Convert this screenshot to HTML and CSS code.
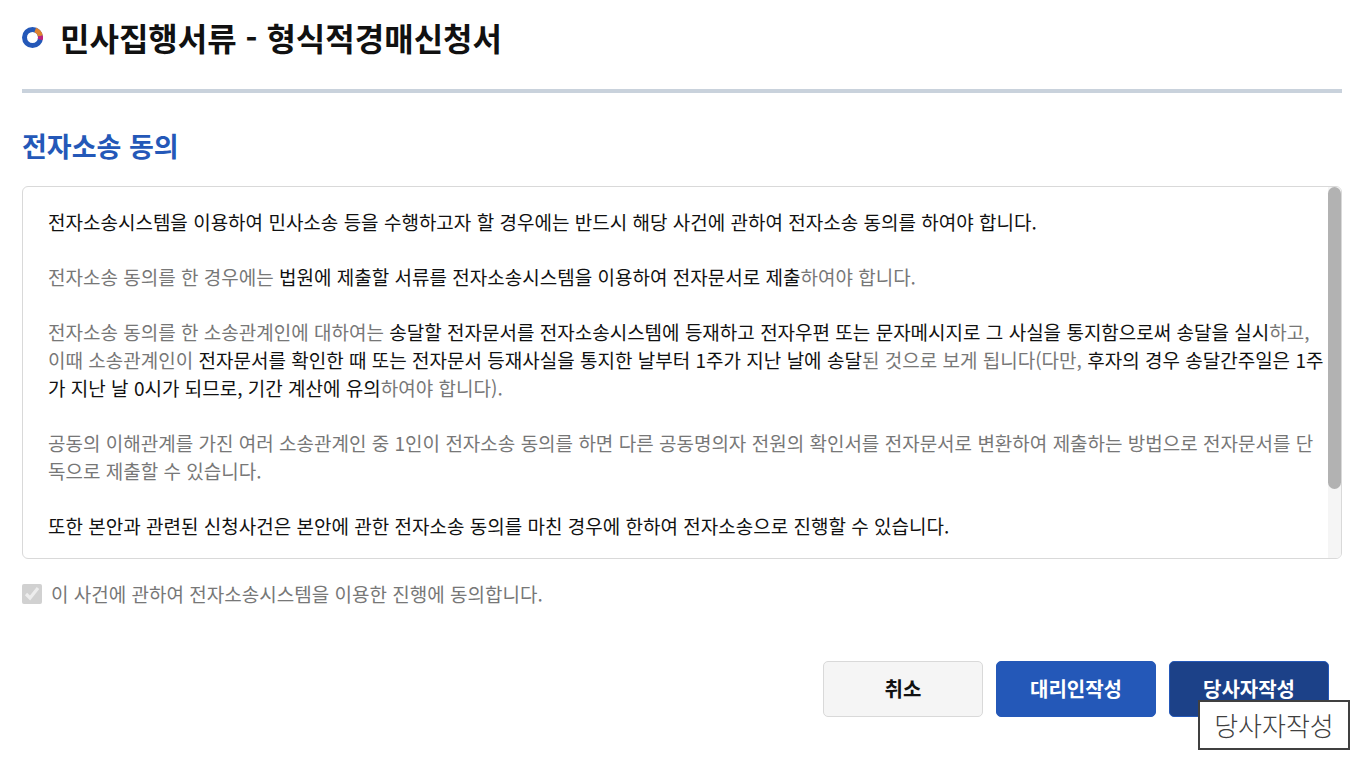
FILE: index.html
```html
<!DOCTYPE html>
<html lang="ko">
<head>
<meta charset="utf-8">
<title>민사집행서류 - 형식적경매신청서</title>
<link rel="stylesheet" href="styles.css">
</head>
<body>
<main class="page">
  <header class="page-header">
    <svg class="title-mark" viewBox="0 0 22 22" aria-hidden="true">
      <circle cx="10.5" cy="10.5" r="8" fill="none" stroke="#2458b8" stroke-width="5"/>
      <path d="M13.2 3A8 8 0 0 1 18.4 9" fill="none" stroke="#e0822f" stroke-width="5"/>
      <path d="M18.4 9A8 8 0 0 1 18.2 12.6" fill="none" stroke="#c0207c" stroke-width="5"/>
    </svg>
    <h1 class="page-title">민사집행서류 - 형식적경매신청서</h1>
  </header>
  <section class="consent">
    <h2 class="section-title">전자소송 동의</h2>
    <div class="terms">
      <div class="terms-body">
        <p><strong>전자소송시스템을 이용하여 민사소송 등을 수행하고자 할 경우에는 반드시 해당 사건에 관하여 전자소송 동의를 하여야 합니다.</strong></p>
        <p>전자소송 동의를 한 경우에는 <strong>법원에 제출할 서류를 전자소송시스템을 이용하여 전자문서로 제출</strong>하여야 합니다.</p>
        <p>전자소송 동의를 한 소송관계인에 대하여는 <strong>송달할 전자문서를 전자소송시스템에 등재하고 전자우편 또는 문자메시지로 그 사실을 통지함으로써 송달을 실시</strong>하고, 이때 소송관계인이 <strong>전자문서를 확인한 때 또는 전자문서 등재사실을 통지한 날부터 1주가 지난 날에 송달</strong>된 것으로 보게 됩니다(다만, <strong>후자의 경우 송달간주일은 1주가 지난 날 0시가 되므로, 기간 계산에 유의</strong>하여야 합니다).</p>
        <p>공동의 이해관계를 가진 여러 소송관계인 중 1인이 전자소송 동의를 하면 다른 공동명의자 전원의 확인서를 전자문서로 변환하여 제출하는 방법으로 전자문서를 단독으로 제출할 수 있습니다.</p>
        <p><strong>또한 본안과 관련된 신청사건은 본안에 관한 전자소송 동의를 마친 경우에 한하여 전자소송으로 진행할 수 있습니다.</strong></p>
      </div>
      <div class="scroll-track"><div class="scroll-thumb"></div></div>
    </div>
    <label class="agree"><input class="agree-box" type="checkbox" checked disabled>이 사건에 관하여 전자소송시스템을 이용한 진행에 동의합니다.</label>
  </section>
  <div class="actions">
    <button class="btn btn-cancel" type="button">취소</button>
    <button class="btn btn-agent" type="button">대리인작성</button>
    <div class="tip-anchor">
      <button class="btn btn-party" type="button" aria-describedby="tip">당사자작성</button>
      <div class="tooltip" id="tip" role="tooltip">당사자작성</div>
    </div>
  </div>
</main>
</body>
</html>
```
FILE: styles.css
```css
* { box-sizing: border-box; }
body { margin: 0; background: #fff; color: #111; font-family: "Noto Sans CJK KR", sans-serif; font-size: 19px; line-height: 28px; }
h1, h2, p { margin: 0; }
.page { padding: 11px 30px 54px 22px; }
.page-header { display: flex; align-items: center; gap: 16px; padding-bottom: 25px; border-bottom: 4px solid #c9d2dc; }
.title-mark { width: 22px; height: 22px; }
.page-title { font-size: 32px; line-height: 53px; font-weight: 700; }
.section-title { margin: 33px 0 20px; color: #2458b8; font-size: 27px; line-height: 40px; font-weight: 700; }
.terms { display: flex; border: 1px solid #d9d9d9; border-radius: 6px; overflow: hidden; }
.terms-body { flex: 1; padding: 21px 2px 18px 25px; color: #777; }
.terms-body p + p { margin-top: 27px; }
.terms-body strong { color: #111; font-weight: 400; }
.scroll-track { width: 13px; background: #f5f5f5; }
.scroll-thumb { height: 302px; border-radius: 7px; background: #b2b2b2; }
.agree { display: flex; align-items: center; gap: 9px; margin-top: 21px; color: #777; }
.agree-box { width: 20px; height: 20px; margin: 0; }
.actions { display: flex; justify-content: flex-end; gap: 13px; padding: 53px 13px 0 0; }
.btn { width: 160px; height: 56px; padding: 0; border: 1px solid #2458b8; border-radius: 5px; background: #2458b8; color: #fff; font: 700 20px/28px "Noto Sans CJK KR", sans-serif; }
.btn-cancel { border-color: #d9d9d9; background: #f5f5f5; color: #111; }
.btn-party { background: #1c4188; }
.tip-anchor { position: relative; }
.tooltip { position: absolute; top: 39px; left: 29px; width: 152px; height: 50px; border: 2px solid #404040; background: #fff; color: #404040; font-size: 26px; line-height: 46px; text-align: center; font-weight: 300; }
```
